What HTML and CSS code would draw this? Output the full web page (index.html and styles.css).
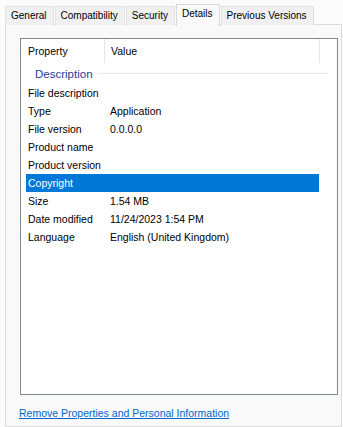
FILE: index.html
```html
<!DOCTYPE html>
<html lang="en">
<head>
    <meta charset="UTF-8">
    <meta name="viewport" content="width=device-width, initial-scale=1.0">
    <title>Properties - Details</title>
    <link rel="stylesheet" href="styles.css">
</head>
<body>
    <div class="tabs">
        <div class="tab">General</div>
        <div class="tab">Compatibility</div>
        <div class="tab">Security</div>
        <div class="tab selected">Details</div>
        <div class="tab">Previous Versions</div>
    </div>
    <div class="page">
        <div class="list">
            <div class="list-header">
                <div class="col-name">Property</div>
                <div class="col-value">Value</div>
                <div class="col-rest"></div>
            </div>
            <div class="group">
                <span class="group-title">Description</span>
                <span class="group-line"></span>
            </div>
            <div class="row"><div>File description</div><div></div></div>
            <div class="row"><div>Type</div><div>Application</div></div>
            <div class="row"><div>File version</div><div>0.0.0.0</div></div>
            <div class="row"><div>Product name</div><div></div></div>
            <div class="row"><div>Product version</div><div></div></div>
            <div class="row active"><div>Copyright</div><div></div></div>
            <div class="row"><div>Size</div><div>1.54 MB</div></div>
            <div class="row"><div>Date modified</div><div>11/24/2023 1:54 PM</div></div>
            <div class="row"><div>Language</div><div>English (United Kingdom)</div></div>
        </div>
        <a class="remove-link" href="#">Remove Properties and Personal Information</a>
    </div>
</body>
</html>
```

FILE: styles.css
```css
body, html {
    margin: 0;
    padding: 0;
    height: 100%;
    overflow: hidden;
    font-family: "Liberation Sans", Arial, sans-serif;
    font-size: 10.5px;
    color: #000;
    background: #fbfbfb;
}

.tabs {
    display: flex;
    align-items: flex-end;
    height: 25px;
    padding-left: 5px;
    position: relative;
    z-index: 1;
}

.tab {
    box-sizing: border-box;
    height: 19px;
    padding: 3px 6px 0 5px;
    margin-right: 1px;
    font-size: 10px;
    background: #f0f0f0;
    border: 1px solid #e3e3e3;
    border-bottom: none;
    white-space: nowrap;
}

.tab.selected {
    height: 22px;
    padding-top: 3px;
    margin-bottom: -1px;
    background: #f9f9f9;
    border-color: #d9d9d9;
}

.page {
    box-sizing: border-box;
    height: calc(100% - 24px);
    margin-left: 5px;
    margin-right: 1px;
    margin-top: -1px;
    border: 1px solid #dcdcdc;
    background: #f9f9f9;
    padding: 13px 0 0 14px;
}

.list {
    box-sizing: border-box;
    width: 318px;
    height: 357px;
    border: 1px solid #828790;
    background: #fff;
}

.list-header {
    display: flex;
    height: 24px;
    line-height: 24px;
}

.col-name {
    width: 76px;
    padding-left: 7px;
    border-right: 1px solid #e5e5e5;
}

.col-value {
    width: 208px;
    padding-left: 6px;
    border-right: 1px solid #e5e5e5;
}

.group {
    display: flex;
    align-items: center;
    height: 21px;
    padding-left: 14px;
    padding-right: 10px;
}

.group-title {
    color: #1e3c96;
    font-size: 11.5px;
}

.group-line {
    flex: 1;
    height: 1px;
    margin-left: 5px;
    background: #e2e8ef;
}

.row {
    display: grid;
    grid-template-columns: 78px 215px;
    width: 293px;
    height: 18px;
    line-height: 18px;
    margin-left: 5px;
}

.row div {
    padding-left: 2px;
    white-space: nowrap;
}

.row div + div {
    padding-left: 6px;
}

.row.active {
    background: #0078d7;
    color: #fff;
}

.remove-link {
    display: inline-block;
    margin-top: 12px;
    margin-left: -1px;
    color: #0066cc;
}
```
